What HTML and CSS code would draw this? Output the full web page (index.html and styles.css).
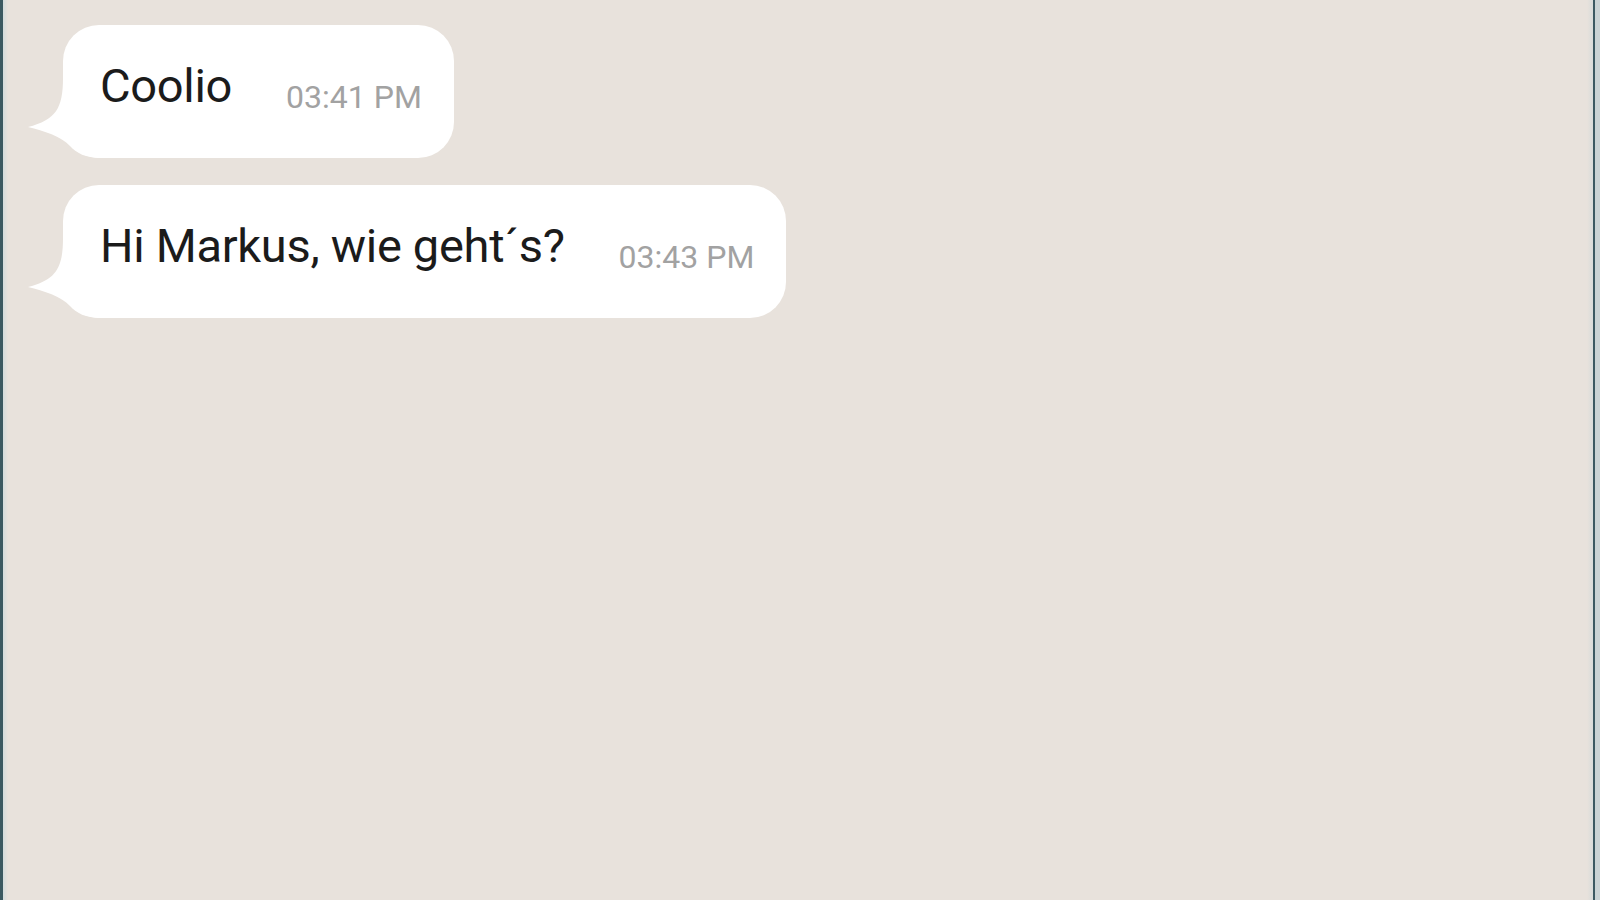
FILE: index.html
```html
<!DOCTYPE html>
<html lang="de">
<head>
<meta charset="utf-8">
<title>Chat</title>
<link rel="stylesheet" href="styles.css">
</head>
<body>
<div class="frame">
  <div class="edge-left"></div>
  <main class="chat">
    <div class="msg-list">
      <div class="bubble">
        <svg class="tail" viewBox="0 0 75 80" width="75" height="80" aria-hidden="true"><path d="M37 0 C37 30 30 42 2 49 C18 53 35 58 44 68 C50 75 60 80 75 80 L75 0 Z" fill="#ffffff"/></svg>
        <span class="text">Coolio</span><span class="time">03:41 PM</span>
      </div>
      <div class="bubble">
        <svg class="tail" viewBox="0 0 75 80" width="75" height="80" aria-hidden="true"><path d="M37 0 C37 30 30 42 2 49 C18 53 35 58 44 68 C50 75 60 80 75 80 L75 0 Z" fill="#ffffff"/></svg>
        <span class="text">Hi Markus, wie geht´s?</span><span class="time">03:43 PM</span>
      </div>
    </div>
  </main>
  <div class="edge-right"></div>
</div>
</body>
</html>
```
FILE: styles.css
```css
html, body {
  margin: 0;
  padding: 0;
  background: #e8e2dc;
}
.frame {
  display: flex;
  width: 1600px;
  height: 900px;
  overflow: hidden;
}
.edge-left {
  width: 3px;
  background: #3b5961;
  flex: none;
}
.chat {
  flex: 1;
  background: linear-gradient(to right, #d3dcdc 0, #e8e2dc 5px, #e8e2dc calc(100% - 6px), #d8dcda 100%);
}
.edge-right {
  width: 7px;
  flex: none;
  background: linear-gradient(to right, #3b5961 0, #3b5961 2px, #c9d3d4 2px);
}
.msg-list {
  display: flex;
  flex-direction: column;
  align-items: flex-start;
  gap: 27px;
  padding: 25px 0 0 60px;
}
.bubble {
  position: relative;
  box-sizing: border-box;
  height: 133px;
  padding: 37px 32px 0 37px;
  background: #ffffff;
  border-radius: 36px;
  white-space: nowrap;
  font-family: Roboto, "Liberation Sans", sans-serif;
  font-size: 47px;
  line-height: 48px;
  color: #1b1b1b;
}
.tail {
  position: absolute;
  left: -37px;
  bottom: 0;
  display: block;
}
.text {
  letter-spacing: -0.3px;
}
.time {
  margin-left: 54px;
  font-size: 32px;
  color: #a2a2a2;
  vertical-align: -6px;
  letter-spacing: 0;
}
```
